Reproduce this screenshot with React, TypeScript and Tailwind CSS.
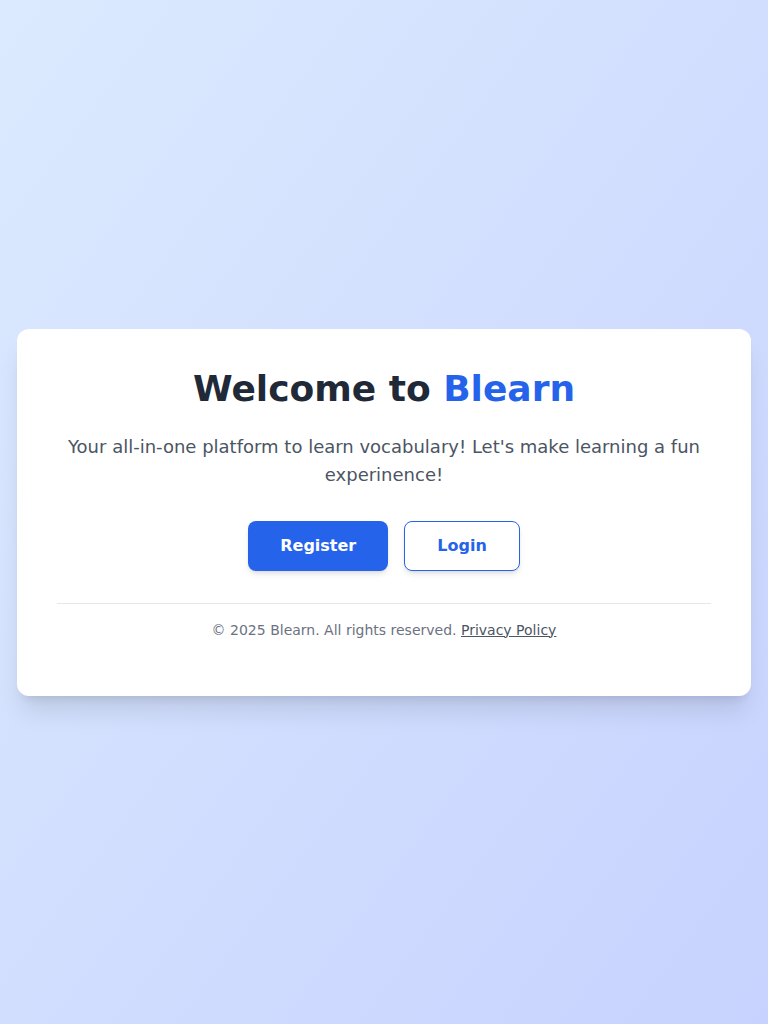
export default function App() {
  return (
    <main className="flex min-h-screen items-center justify-center bg-gradient-to-br from-[#dbeafe] to-[#c7d2fe] p-[17px] font-['DejaVu_Sans',sans-serif]">
      <section className="w-full rounded-xl bg-white p-10 text-center shadow-xl">
        <h1 className="mb-6 text-4xl font-bold text-[#1f2937]">
          Welcome to <span className="text-[#2563eb]">Blearn</span>
        </h1>
        <p className="mb-8 text-lg leading-7 text-[#4b5563]">
          Your all-in-one platform to learn vocabulary! Let's make learning a
          fun experinence!
        </p>
        <div className="flex justify-center gap-4">
          <button
            className="rounded-lg bg-[#2563eb] px-8 py-[13px] font-bold text-white shadow-md"
            type="button"
          >
            Register
          </button>
          <button
            className="rounded-lg border border-[#2563eb] bg-white px-8 py-3 font-bold text-[#2563eb] shadow-md"
            type="button"
          >
            Login
          </button>
        </div>
        <footer className="mt-8 border-t border-[#e5e7eb] py-4 text-sm text-[#6b7280]">
          © 2025 Blearn. All rights reserved.{" "}
          <a className="text-[#4b5563] underline" href="#">
            Privacy Policy
          </a>
        </footer>
      </section>
    </main>
  );
}
